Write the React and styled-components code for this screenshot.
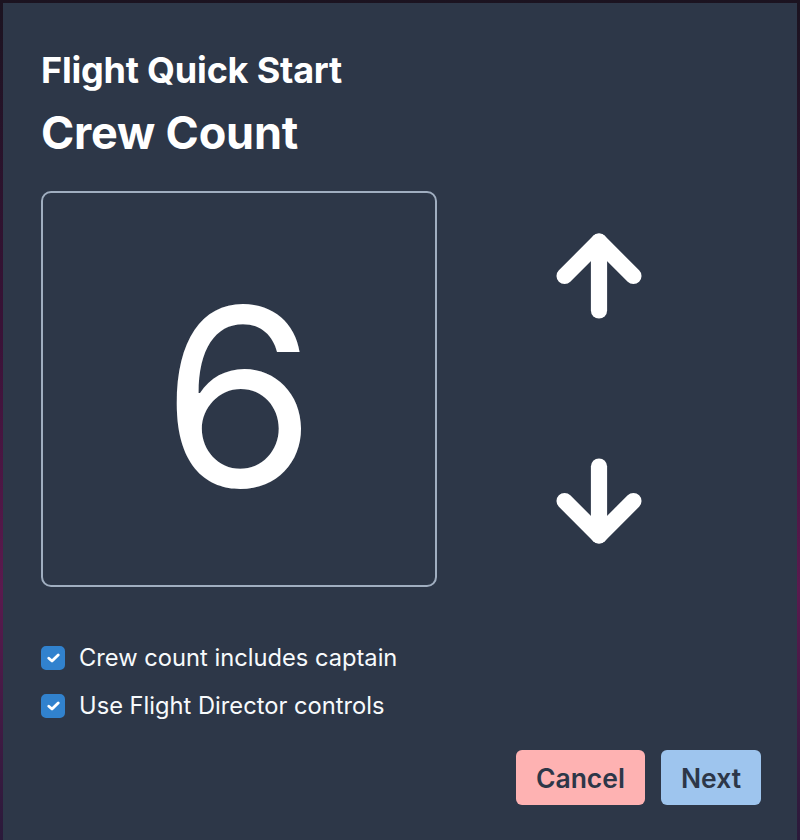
import React, { useState } from "react"
import styled, { createGlobalStyle } from "styled-components"

const GlobalStyle = createGlobalStyle`
  html, body {
    margin: 0;
    padding: 0;
  }

  body {
    background: linear-gradient(180deg, #1b1320 0%, #3a1237 40%, #5b1a4e 70%, #2a1a3a 100%);
    font-family: Inter, "Noto Sans", "Liberation Sans", sans-serif;
    color: #fff;
  }
`

function ArrowIcon({ direction }) {
  const up = direction === "up"
  return (
    <svg width="118" height="118" viewBox="0 0 24 24" fill="none"
      stroke="#fff" strokeWidth="3.3" strokeLinecap="round" strokeLinejoin="round">
      {up ? (
        <>
          <line x1="12" y1="19" x2="12" y2="5" />
          <polyline points="5 12 12 5 19 12" />
        </>
      ) : (
        <>
          <line x1="12" y1="5" x2="12" y2="19" />
          <polyline points="19 12 12 19 5 12" />
        </>
      )}
    </svg>
  )
}

function CheckIcon() {
  return (
    <svg width="13" height="10" viewBox="0 0 13 10" fill="none">
      <polyline points="1.8 5.2 5 8 11.2 2" stroke="#fff" strokeWidth="2.8"
        strokeLinecap="round" strokeLinejoin="round" />
    </svg>
  )
}

export default function App() {
  const [count, setCount] = useState(6)
  const [includesCaptain, setIncludesCaptain] = useState(true)
  const [directorControls, setDirectorControls] = useState(true)

  return (
    <>
      <GlobalStyle />
      <Modal>
        <Title>Flight Quick Start</Title>
        <Heading>Crew Count</Heading>
        <CounterRow>
          <CountBox>{count}</CountBox>
          <ArrowColumn>
            <ArrowButton aria-label="increase" onClick={() => setCount(count + 1)}>
              <ArrowIcon direction="up" />
            </ArrowButton>
            <ArrowButton aria-label="decrease" onClick={() => setCount(Math.max(1, count - 1))}>
              <ArrowIcon direction="down" />
            </ArrowButton>
          </ArrowColumn>
        </CounterRow>
        <Options>
          <CheckRow onClick={() => setIncludesCaptain(!includesCaptain)}>
            <Box $checked={includesCaptain}>{includesCaptain && <CheckIcon />}</Box>
            Crew count includes captain
          </CheckRow>
          <CheckRow onClick={() => setDirectorControls(!directorControls)}>
            <Box $checked={directorControls}>{directorControls && <CheckIcon />}</Box>
            Use Flight Director controls
          </CheckRow>
        </Options>
        <Footer>
          <Button $variant="cancel">Cancel</Button>
          <Button $variant="next">Next</Button>
        </Footer>
      </Modal>
    </>
  )
}

const Modal = styled.div`
  margin: 3px 3px 0 3px;
  min-height: 837px;
  box-sizing: border-box;
  background-color: #2d3748;
  padding: 44px 36px 30px 38px;
`

const Title = styled.h2`
  margin: 0;
  font-size: 36px;
  font-weight: 700;
  line-height: 46px;
  letter-spacing: -0.2px;
`

const Heading = styled.h1`
  margin: 12px 0 0 0;
  font-size: 45px;
  font-weight: 700;
  line-height: 56px;
  letter-spacing: -0.2px;
`

const CounterRow = styled.div`
  display: flex;
  align-items: stretch;
  margin-top: 30px;
`

const CountBox = styled.div`
  width: 396px;
  height: 396px;
  box-sizing: border-box;
  border: 2px solid #a0aec0;
  border-radius: 10px;
  display: flex;
  align-items: center;
  justify-content: center;
  font-size: 248px;
  font-weight: 400;
  line-height: 1;
  padding-top: 16px;
`

const ArrowColumn = styled.div`
  width: 323px;
  display: flex;
  flex-direction: column;
  align-items: center;
  justify-content: space-between;
  padding: 26px 0 27px;
`

const ArrowButton = styled.button`
  background: none;
  border: none;
  padding: 0;
  cursor: pointer;
  display: flex;
`

const Options = styled.div`
  display: flex;
  flex-direction: column;
  gap: 20px;
  margin-top: 57px;
`

const CheckRow = styled.label`
  display: flex;
  align-items: center;
  gap: 14px;
  font-size: 23.7px;
  line-height: 28px;
  color: #f7fafc;
  cursor: pointer;
`

const Box = styled.span`
  width: 24px;
  height: 24px;
  border-radius: 5px;
  box-sizing: border-box;
  display: flex;
  align-items: center;
  justify-content: center;
  background-color: ${(p) => (p.$checked ? "#3182ce" : "transparent")};
  border: 2px solid ${(p) => (p.$checked ? "#3182ce" : "#a0aec0")};
`

const Footer = styled.div`
  display: flex;
  justify-content: flex-end;
  gap: 16px;
  margin-top: 30px;
`

const Button = styled.button`
  height: 55px;
  padding: 0 20px;
  border: none;
  border-radius: 6px;
  font-family: inherit;
  font-size: 26.5px;
  font-weight: 600;
  color: #2d3748;
  cursor: pointer;
  background-color: ${(p) => (p.$variant === "cancel" ? "#feb2b2" : "#9ec5ee")};
`
